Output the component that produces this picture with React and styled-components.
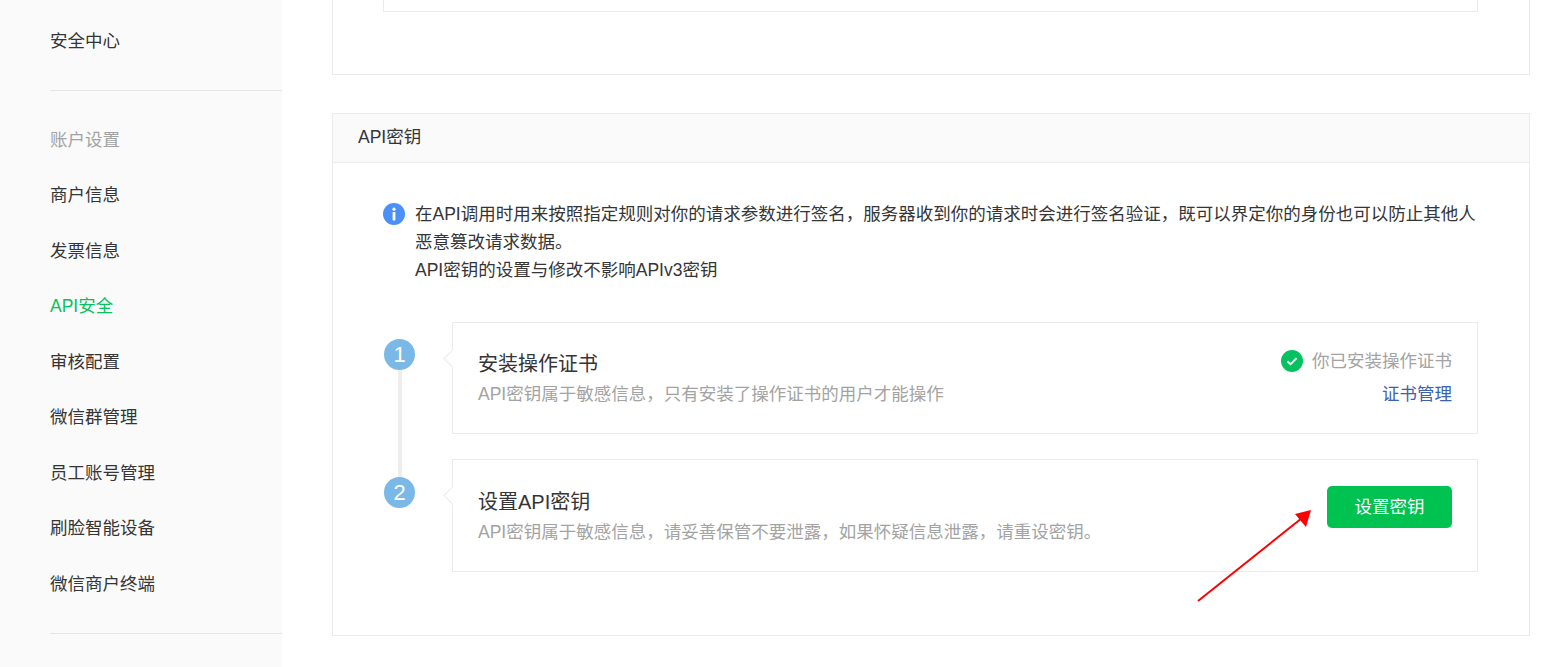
import React from 'react';
import styled, { createGlobalStyle } from 'styled-components';

const GlobalStyle = createGlobalStyle`
	html, body {
		margin: 0;
		padding: 0;
		height: 100%;
		overflow: hidden;
		background: #fff;
	}
	body {
		font-family: "Liberation Sans", "Noto Sans CJK SC", sans-serif;
		font-size: 17.5px;
		line-height: 28px;
		color: #353535;
	}
`;

const Page = styled.div`
	display: flex;
	height: 667px;
	overflow: hidden;
`;

const Sidebar = styled.aside`
	flex: 0 0 282px;
	box-sizing: border-box;
	padding: 13px 0 0 50px;
	background: #fafafa;
`;

const NavGroup = styled.div`
	padding-bottom: ${(p) => (p.$first ? 21 : 22)}px;
	margin-bottom: 21px;
	border-bottom: 1px solid #e5e5e5;
`;

const NavItem = styled.div`
	height: 55.5px;
	line-height: 56px;
	color: ${(p) => (p.$active ? '#07c160' : p.$muted ? '#a3a3a3' : '#353535')};
`;

const Main = styled.main`
	flex: 0 0 1198px;
	margin-left: 50px;
`;

const TopCard = styled.section`
	box-sizing: border-box;
	height: 75px;
	padding: 0 51px 0 50px;
	border: 1px solid #ebebeb;
	border-top: 0;
`;

const TopInner = styled.div`
	height: 11px;
	border: 1px solid #ebebeb;
	border-top: 0;
`;

const Card = styled.section`
	box-sizing: border-box;
	height: 523px;
	margin-top: 38px;
	border: 1px solid #ebebeb;
`;

const CardHeader = styled.header`
	box-sizing: border-box;
	height: 49px;
	padding-left: 25px;
	line-height: 46px;
	background: #fafafa;
	border-bottom: 1px solid #ebebeb;
`;

const CardBody = styled.div`
	padding: 37px 51px 0 50px;
`;

const Notice = styled.div`
	display: flex;
	gap: 10px;
`;

const NoticeIcon = styled.svg`
	flex: 0 0 22px;
	width: 22px;
	height: 22px;
	margin-top: 3px;
`;

const NoticeText = styled.p`
	margin: 0;
`;

const Steps = styled.div`
	display: flex;
	flex-direction: column;
	gap: 25px;
	margin-top: 38px;
`;

const Step = styled.div`
	display: flex;
	position: relative;
`;

const StepMarker = styled.div`
	flex: 0 0 69px;
	box-sizing: border-box;
	padding: ${(p) => p.$top}px 0 0 1px;
`;

const StepDot = styled.div`
	position: relative;
	z-index: 1;
	width: 31px;
	height: 31px;
	border-radius: 50%;
	background: #7ab8e8;
	color: #fff;
	font-size: 22px;
	line-height: 31px;
	text-align: center;
`;

const StepLine = styled.div`
	position: absolute;
	left: 15px;
	top: 48px;
	width: 4px;
	height: 112px;
	background: #eee;
`;

const StepCard = styled.div`
	flex: 1;
	position: relative;
	box-sizing: border-box;
	height: ${(p) => p.$height}px;
	padding: 26px 25px 0 25px;
	display: flex;
	justify-content: space-between;
	background: #fff;
	border: 1px solid #ebebeb;

	&::before {
		content: '';
		position: absolute;
		left: -7px;
		top: 29px;
		width: 12px;
		height: 12px;
		background: #fff;
		border-left: 1px solid #ebebeb;
		border-bottom: 1px solid #ebebeb;
		transform: rotate(45deg);
	}
`;

const StepText = styled.div`
	padding-top: ${(p) => p.$top || 0}px;
`;

const StepTitle = styled.h3`
	margin: 0;
	font-size: 20px;
	font-weight: 400;
	line-height: 30px;
`;

const StepDesc = styled.p`
	margin: 0;
	color: #a3a3a3;
	line-height: 30px;
`;

const StepSide = styled.div`
	display: flex;
	flex-direction: column;
	align-items: flex-end;
	gap: 5px;
`;

const Installed = styled.div`
	display: flex;
	align-items: center;
	gap: 9px;
	margin-top: -2px;
	color: #a3a3a3;
`;

const CheckIcon = styled.svg`
	width: 22px;
	height: 22px;
`;

const ManageLink = styled.a`
	color: #3d62ad;
	text-decoration: none;
`;

const PrimaryButton = styled.button`
	width: 125px;
	height: 42px;
	padding: 0;
	border: 0;
	border-radius: 5px;
	background: #00c250;
	color: #fff;
	font: inherit;
	cursor: pointer;
`;

const ArrowMark = styled.svg`
	position: absolute;
	left: 745px;
	top: 49px;
	width: 116px;
	height: 94px;
	overflow: visible;
`;

const sideNav = ['商户信息', '发票信息', 'API安全', '审核配置', '微信群管理', '员工账号管理', '刷脸智能设备', '微信商户终端'];

const App = () => {
	return (
		<>
			<GlobalStyle />
			<Page>
				<Sidebar>
					<NavGroup $first>
						<NavItem>安全中心</NavItem>
					</NavGroup>
					<NavGroup>
						<NavItem $muted>账户设置</NavItem>
						{sideNav.map((item) => (
							<NavItem key={item} $active={item === 'API安全'}>
								{item}
							</NavItem>
						))}
					</NavGroup>
				</Sidebar>
				<Main>
					<TopCard>
						<TopInner />
					</TopCard>
					<Card>
						<CardHeader>API密钥</CardHeader>
						<CardBody>
							<Notice>
								<NoticeIcon viewBox='0 0 22 22'>
									<circle cx='11' cy='11' r='11' fill='#4b8ff8' />
									<circle cx='11' cy='6.2' r='1.6' fill='#fff' />
									<rect x='9.6' y='9' width='2.8' height='8.4' rx='0.6' fill='#fff' />
								</NoticeIcon>
								<NoticeText>
									在API调用时用来按照指定规则对你的请求参数进行签名，服务器收到你的请求时会进行签名验证，既可以界定你的身份也可以防止其他人恶意篡改请求数据。
									<br />
									API密钥的设置与修改不影响APIv3密钥
								</NoticeText>
							</Notice>
							<Steps>
								<Step>
									<StepMarker $top={17}>
										<StepDot>1</StepDot>
									</StepMarker>
									<StepLine />
									<StepCard $height={112}>
										<StepText>
											<StepTitle>安装操作证书</StepTitle>
											<StepDesc>API密钥属于敏感信息，只有安装了操作证书的用户才能操作</StepDesc>
										</StepText>
										<StepSide>
											<Installed>
												<CheckIcon viewBox='0 0 22 22'>
													<circle cx='11' cy='11' r='11' fill='#07c160' />
													<path d='M6.4 11.2l3.2 3 6-6' fill='none' stroke='#fff' strokeWidth='1.9' />
												</CheckIcon>
												你已安装操作证书
											</Installed>
											<ManageLink href='#'>证书管理</ManageLink>
										</StepSide>
									</StepCard>
								</Step>
								<Step>
									<StepMarker $top={18}>
										<StepDot>2</StepDot>
									</StepMarker>
									<StepCard $height={113}>
										<StepText $top={1}>
											<StepTitle>设置API密钥</StepTitle>
											<StepDesc>API密钥属于敏感信息，请妥善保管不要泄露，如果怀疑信息泄露，请重设密钥。</StepDesc>
										</StepText>
										<PrimaryButton>设置密钥</PrimaryButton>
										<ArrowMark viewBox='0 0 116 94'>
											<path d='M0 92L104 9' stroke='#f00' strokeWidth='2' fill='none' />
											<path d='M113 1L97 5L108 18Z' fill='#f00' />
										</ArrowMark>
									</StepCard>
								</Step>
							</Steps>
						</CardBody>
					</Card>
				</Main>
			</Page>
		</>
	);
};

export default App;
